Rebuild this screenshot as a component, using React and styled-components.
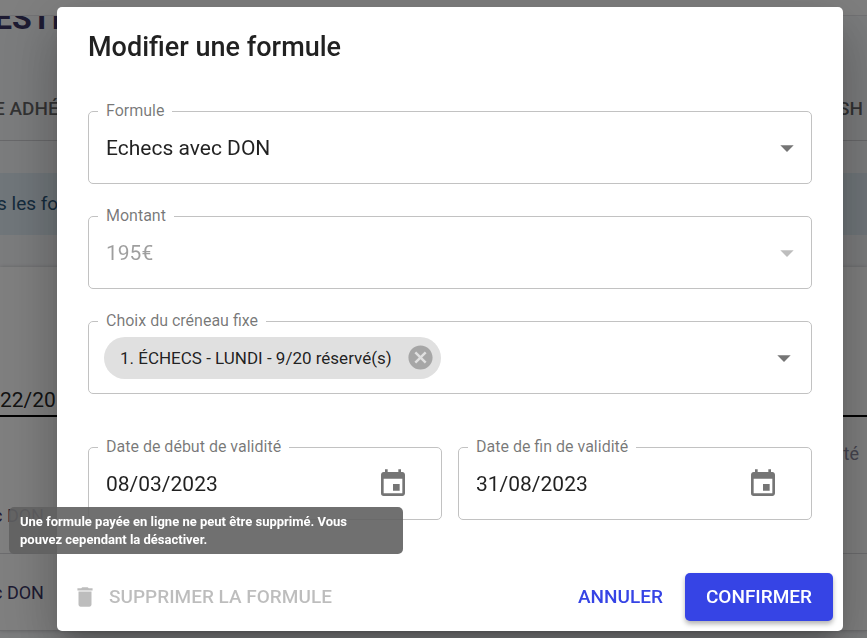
import React, { useState } from 'react'
import styled, { createGlobalStyle } from 'styled-components'
import { MdArrowDropDown, MdCancel, MdDelete, MdEvent } from 'react-icons/md'

const colors = {
  primary: '#3644e5',
  text: 'rgba(0, 0, 0, 0.87)',
  secondary: 'rgba(0, 0, 0, 0.54)',
  disabled: 'rgba(0, 0, 0, 0.38)',
  faded: 'rgba(0, 0, 0, 0.26)',
  outline: '#c2c2c2',
  navy: '#3a3564',
}

const GlobalStyle = createGlobalStyle`
  * {
    box-sizing: border-box;
  }
  body {
    margin: 0;
    overflow: hidden;
    font-family: Roboto, sans-serif;
    color: ${colors.text};
  }
  button, input, select {
    font: inherit;
    color: inherit;
  }
`

/* Page behind the dialog */

const Page = styled.div`
  height: 100vh;
  overflow: hidden;
  background: #f7f8fb;
`

const TopBar = styled.div`
  height: 16px;
  background: #fff;
  border-bottom: 1px solid #e4e4e8;
`

const Hero = styled.div`
  height: 62px;
  overflow: hidden;
`

const PageTitle = styled.h1`
  margin: -16px 0 0 -6px;
  font-size: 32px;
  line-height: 36px;
  font-weight: 700;
  color: ${colors.navy};
`

const PageTabs = styled.div`
  display: flex;
  justify-content: space-between;
  height: 63px;
  margin-left: -6px;
  padding-right: 4px;
  border-bottom: 1px solid #d0d0d4;
  font-size: 19px;
  line-height: 62px;
  font-weight: 500;
  color: rgba(0, 0, 0, 0.6);
`

const Info = styled.div`
  height: 62px;
  margin: 32px 0 32px -3px;
  background: #e0ecf4;
  font-size: 19px;
  line-height: 62px;
  color: #2a5578;
`

const Card = styled.div`
  padding-top: 118px;
  background: #fff;
  box-shadow: 0 0 4px rgba(0, 0, 0, 0.2);
`

const Season = styled.div`
  height: 32px;
  border-bottom: 2px solid #000;
  font-size: 21px;
  line-height: 30px;
`

const TableHead = styled.div`
  height: 60px;
  padding: 26px 8px 0 0;
  font-size: 18px;
  line-height: 22px;
  text-align: right;
  color: #8d8aa0;
`

const TableRow = styled.div`
  display: flex;
  align-items: center;
  height: 77px;
  margin-left: -7px;
  border-bottom: 1px solid #d8d8dc;
  font-size: 18px;
  color: ${colors.navy};
`

/* Dialog */

const Backdrop = styled.div`
  position: fixed;
  inset: 0;
  display: flex;
  padding: 7px 24px 7px 57px;
  background: rgba(0, 0, 0, 0.5);
`

const Dialog = styled.div`
  flex: 1;
  display: flex;
  flex-direction: column;
  border-radius: 5px;
  background: #fff;
  box-shadow: 0 14px 20px -9px rgba(0, 0, 0, 0.2), 0 31px 50px 4px rgba(0, 0, 0, 0.14),
    0 12px 60px 10px rgba(0, 0, 0, 0.12);
`

const DialogTitle = styled.h2`
  margin: 0;
  padding: 19px 31px 21px;
  font-size: 27px;
  line-height: 42px;
  font-weight: 500;
`

const DialogContent = styled.div`
  flex: 1;
  display: flex;
  flex-direction: column;
  gap: 32px;
  padding: 22px 31px 0;
`

const Dates = styled.div`
  display: grid;
  grid-template-columns: 1fr 1fr;
  gap: 16px;
  margin-top: 21px;
`

const Field = styled.div`
  position: relative;
  display: flex;
  align-items: center;
  height: 73px;
  border: 1px solid ${colors.outline};
  border-radius: 5px;
  font-size: 21px;
  color: ${props => (props.disabled ? colors.disabled : colors.text)};
`

const Label = styled.label`
  position: absolute;
  top: -11px;
  left: 9px;
  padding: 0 8px;
  background: #fff;
  font-size: 16px;
  line-height: 20px;
  color: ${colors.secondary};
`

const Select = styled.select`
  flex: 1;
  height: 100%;
  padding: 0 48px 0 17px;
  border: 0;
  background: transparent;
  appearance: none;
  outline: 0;
  opacity: 1;
`

const SelectArrow = styled(MdArrowDropDown)`
  position: absolute;
  right: 8px;
  font-size: 32px;
  color: ${props => (props.disabled ? colors.faded : colors.secondary)};
  pointer-events: none;
`

const DateInput = styled.input`
  flex: 1;
  min-width: 0;
  height: 100%;
  padding: 0 0 0 17px;
  border: 0;
  background: transparent;
  outline: 0;
`

const IconButton = styled.button`
  display: flex;
  margin-right: ${props => props.gap || 0}px;
  padding: 0;
  border: 0;
  background: none;
  color: ${props => (props.light ? colors.faded : colors.secondary)};
  font-size: ${props => props.size || 32}px;
  cursor: pointer;
`

const Slots = styled.div`
  flex: 1;
  display: flex;
  padding-left: 15px;
`

const Chip = styled.div`
  display: flex;
  align-items: center;
  gap: 14px;
  height: 42px;
  padding: 0 6px 0 16px;
  border-radius: 21px;
  background: #e0e0e0;
  font-size: 17px;
`

const Actions = styled.div`
  display: flex;
  align-items: center;
  justify-content: flex-end;
  gap: 11px;
  padding: 10px;
`

const Button = styled.button`
  display: flex;
  align-items: center;
  gap: 11px;
  height: 48px;
  margin-right: ${props => (props.first ? 'auto' : '0')};
  padding: 0 ${props => (props.contained ? 21 : 11)}px;
  padding-left: ${props => props.first && '5px'};
  border: 0;
  border-radius: 5px;
  background: ${props => (props.contained ? colors.primary : 'transparent')};
  box-shadow: ${props => (props.contained ? '0 3px 5px rgba(0, 0, 0, 0.3)' : 'none')};
  color: ${props => (props.contained ? '#fff' : colors.primary)};
  font-size: 19px;
  line-height: 22px;
  font-weight: 500;
  cursor: pointer;

  &:disabled {
    color: ${colors.faded};
    cursor: default;
  }
  & svg {
    font-size: 26px;
  }
`

const Tooltip = styled.div`
  position: absolute;
  left: 9px;
  bottom: 84px;
  width: 394px;
  padding: 6px 11px 5px;
  border-radius: 5px;
  background: rgba(97, 97, 97, 0.9);
  color: #fff;
  font-size: 13px;
  line-height: 18px;
  font-weight: 700;
`

const DateField = ({ id, label, defaultValue }) => (
  <Field>
    <Label htmlFor={id}>{label}</Label>
    <DateInput id={id} type="text" defaultValue={defaultValue} />
    <IconButton type="button" aria-label={label} gap={32}>
      <MdEvent />
    </IconButton>
  </Field>
)

export default function App() {
  const [slots, setSlots] = useState(['1. ÉCHECS - LUNDI - 9/20 réservé(s)'])

  return (
    <>
      <GlobalStyle />
      <Page>
        <TopBar />
        <Hero>
          <PageTitle>ESTI</PageTitle>
        </Hero>
        <PageTabs>
          <span>E ADHÉ</span>
          <span>SH</span>
        </PageTabs>
        <Info>s les fo</Info>
        <Card>
          <Season>22/20</Season>
          <TableHead>té</TableHead>
          <TableRow>c DON</TableRow>
          <TableRow>c DON</TableRow>
        </Card>
      </Page>

      <Backdrop>
        <Dialog role="dialog" aria-labelledby="dialog-title">
          <DialogTitle id="dialog-title">Modifier une formule</DialogTitle>
          <DialogContent>
            <Field>
              <Label htmlFor="formule">Formule</Label>
              <Select id="formule">
                <option>Echecs avec DON</option>
              </Select>
              <SelectArrow />
            </Field>
            <Field disabled>
              <Label htmlFor="montant">Montant</Label>
              <Select id="montant" disabled>
                <option>195€</option>
              </Select>
              <SelectArrow disabled />
            </Field>
            <Field>
              <Label as="span" id="creneau">Choix du créneau fixe</Label>
              <Slots role="group" aria-labelledby="creneau">
                {slots.map(slot => (
                  <Chip key={slot}>
                    {slot}
                    <IconButton
                      type="button"
                      aria-label="Retirer"
                      size={29}
                      light
                      onClick={() => setSlots(slots.filter(s => s !== slot))}
                    >
                      <MdCancel />
                    </IconButton>
                  </Chip>
                ))}
              </Slots>
              <IconButton type="button" aria-labelledby="creneau" gap={11}>
                <MdArrowDropDown />
              </IconButton>
            </Field>
            <Dates>
              <DateField id="debut" label="Date de début de validité" defaultValue="08/03/2023" />
              <DateField id="fin" label="Date de fin de validité" defaultValue="31/08/2023" />
            </Dates>
          </DialogContent>
          <Actions>
            <Button type="button" first disabled aria-describedby="tooltip">
              <MdDelete />
              SUPPRIMER LA FORMULE
            </Button>
            <Button type="button">ANNULER</Button>
            <Button type="button" contained>CONFIRMER</Button>
          </Actions>
        </Dialog>
        <Tooltip role="tooltip" id="tooltip">
          Une formule payée en ligne ne peut être supprimé. Vous pouvez cependant la désactiver.
        </Tooltip>
      </Backdrop>
    </>
  )
}
